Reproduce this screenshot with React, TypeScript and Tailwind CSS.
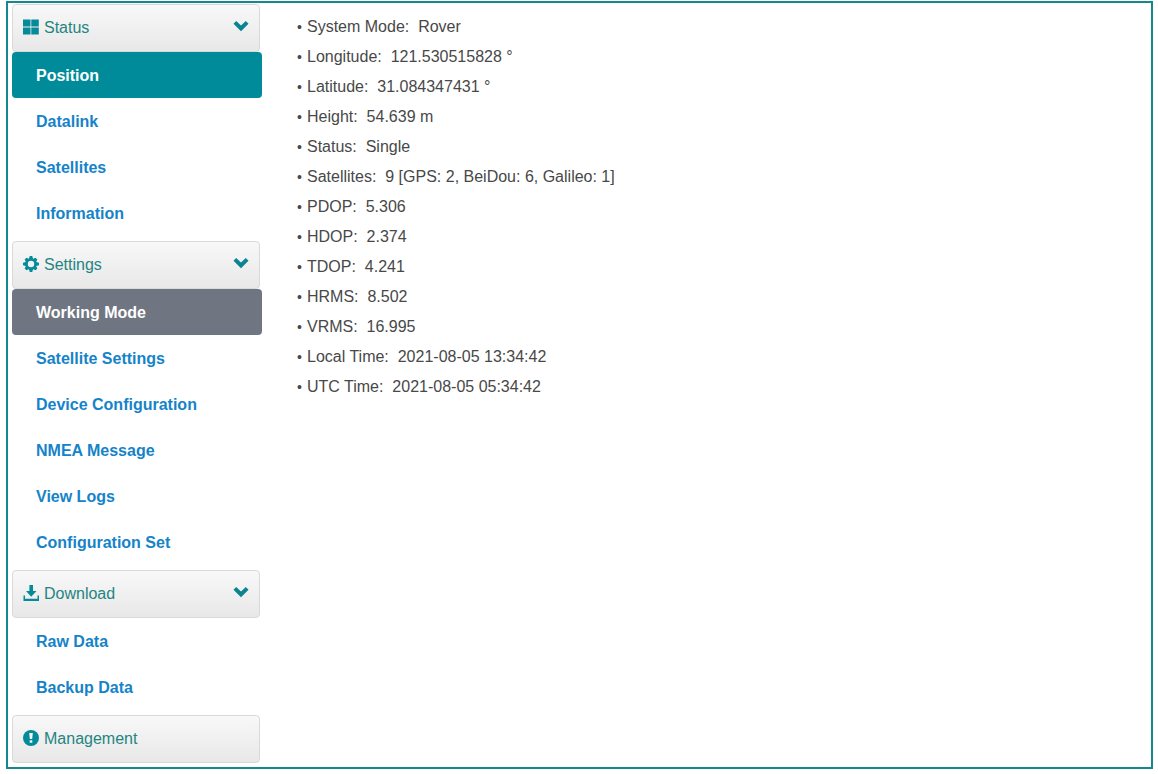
import { useState } from 'react';
import type { ReactNode } from 'react';

import clsx from 'clsx';

type Section = { id: string; label: string; icon: ReactNode; items: string[] };

const GridIcon = () => (
  <svg viewBox="0 0 16 16" className="h-4 w-4" fill="currentColor" aria-hidden="true">
    <path d="M0 .5h7.500v7H0zM8.300.5h7.500v7H8.300zM0 8.500h7.500v7H0zM8.300 8.500h7.500v7H8.300z" />
  </svg>
);

const GearIcon = () => (
  <svg viewBox="0 0 16 16" className="h-4 w-4" fill="currentColor" aria-hidden="true">
    <path d="M6.700 0h2.600l.7 3H6zM6.700 16h2.600l.7-3H6zM0 6.700v2.600l3 .7V6zM16 6.700v2.600l-3 .7V6z" />
    <path
      d="M6.700.300h2.600l.9 3H5.800zM6.700 15.700h2.600l.9-3H5.800zM.300 6.700v2.600l3 .9V5.800zM15.700 6.700v2.600l-3 .9V5.800z"
      transform="rotate(45 8 8)"
    />
    <circle cx="8" cy="8" r="4.500" fill="none" stroke="currentColor" strokeWidth="2.600" />
  </svg>
);

const DownloadIcon = () => (
  <svg viewBox="0 0 16 16" className="h-4 w-4" fill="currentColor" aria-hidden="true">
    <path d="M6.400 0h3.600v6h3.500L8.200 11.800 3 6h3.400z" />
    <path d="M.5 10.500H2v3.200h12.500v-3.200H16V16H.5z" />
  </svg>
);

const AlertIcon = () => (
  <svg viewBox="0 0 16 16" className="h-4 w-4" aria-hidden="true">
    <circle cx="8" cy="8" r="8" fill="currentColor" />
    <path d="M6.200 3h3.600L9.200 9H6.800zM6.700 10.200h2.600v2.600H6.700z" fill="#f4f4f4" />
  </svg>
);

const ChevronIcon = () => (
  <svg viewBox="0 0 16 12" className="h-3 w-4" fill="currentColor" aria-hidden="true">
    <path d="M3.200 1 8 5.500 12.800 1 15.500 3.800 8 11.200.5 3.800z" />
  </svg>
);

const SECTIONS: Section[] = [
  {
    id: 'status',
    label: 'Status',
    icon: <GridIcon />,
    items: ['Position', 'Datalink', 'Satellites', 'Information'],
  },
  {
    id: 'settings',
    label: 'Settings',
    icon: <GearIcon />,
    items: [
      'Working Mode',
      'Satellite Settings',
      'Device Configuration',
      'NMEA Message',
      'View Logs',
      'Configuration Set',
    ],
  },
  { id: 'download', label: 'Download', icon: <DownloadIcon />, items: ['Raw Data', 'Backup Data'] },
  { id: 'management', label: 'Management', icon: <AlertIcon />, items: [] },
];

const DETAILS = [
  { label: 'System Mode', value: 'Rover' },
  { label: 'Longitude', value: '121.530515828 °' },
  { label: 'Latitude', value: '31.084347431 °' },
  { label: 'Height', value: '54.639 m' },
  { label: 'Status', value: 'Single' },
  { label: 'Satellites', value: '9 [GPS: 2, BeiDou: 6, Galileo: 1]' },
  { label: 'PDOP', value: '5.306' },
  { label: 'HDOP', value: '2.374' },
  { label: 'TDOP', value: '4.241' },
  { label: 'HRMS', value: '8.502' },
  { label: 'VRMS', value: '16.995' },
  { label: 'Local Time', value: '2021-08-05 13:34:42' },
  { label: 'UTC Time', value: '2021-08-05 05:34:42' },
];

function Sidebar() {
  const [closed, setClosed] = useState<string[]>([]);
  const [active, setActive] = useState('Position');

  const toggle = (id: string) =>
    setClosed((prev) => (prev.includes(id) ? prev.filter((s) => s !== id) : [...prev, id]));

  return (
    <nav className="flex w-[250px] shrink-0 flex-col gap-[5px]" aria-label="Receiver menu">
      {SECTIONS.map(({ id, label, icon, items }) => (
        <div key={id}>
          <button
            type="button"
            className="flex h-12 w-[248px] items-center gap-[5px] rounded border border-[#d9d9d9] bg-linear-to-b from-[#f8f8f8] to-[#e8e8e8] px-2.5 text-[#1f8582]"
            aria-expanded={items.length > 0 ? !closed.includes(id) : undefined}
            onClick={() => toggle(id)}
          >
            <span className="pb-0.5 text-[#058a9a]">{icon}</span>
            <span>{label}</span>
            {items.length > 0 && (
              <span className="ml-auto pb-1 text-[#0a8490]">
                <ChevronIcon />
              </span>
            )}
          </button>

          {items.length > 0 && !closed.includes(id) && (
            <ul>
              {items.map((item) => (
                <li key={item}>
                  <a
                    href="#"
                    className={clsx(
                      'flex h-[46px] items-center rounded px-6 pt-0.5 font-bold',
                      item === active && 'bg-[#008b9b] text-white',
                      item !== active && item === 'Working Mode' && 'bg-[#707681] text-white',
                      item !== active && item !== 'Working Mode' && 'text-[#1583c9]',
                    )}
                    aria-current={item === active ? 'page' : undefined}
                    onClick={() => setActive(item)}
                  >
                    {item}
                  </a>
                </li>
              ))}
            </ul>
          )}
        </div>
      ))}
    </nav>
  );
}

export default function App() {
  return (
    <div className="min-h-screen bg-white pt-px pr-[5px] pb-[5px] pl-1.5 font-['Liberation_Sans',Arial,sans-serif] text-base">
      <div className="flex border-2 border-[#14888f] pt-px pb-1 pl-1">
        <Sidebar />

        <main className="min-w-0 flex-1 pt-2 pl-[35px] text-[#484848]">
          <ul>
            {DETAILS.map(({ label, value }) => (
              <li key={label} className="flex leading-[30px]">
                <span className="w-2.5 text-sm leading-[30px]" aria-hidden="true">
                  •
                </span>
                <span className="whitespace-pre-wrap">{`${label}:  ${value}`}</span>
              </li>
            ))}
          </ul>
        </main>
      </div>
    </div>
  );
}
